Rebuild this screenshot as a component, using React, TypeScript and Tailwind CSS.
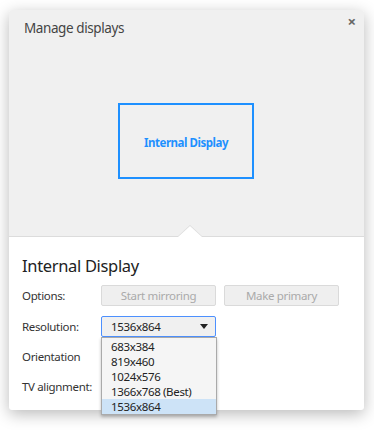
const resolutions = ["683x384", "819x460", "1024x576", "1366x768 (Best)", "1536x864"];

const App = () => {
  return (
    <div className="w-[374px] h-[430px] bg-white pt-[10px] pl-[9px] font-['Noto_Sans',sans-serif] overflow-hidden">
      <div className="relative flex flex-col w-[355px] h-[400px] bg-white rounded-[3px] shadow-[0_4px_16px_rgba(0,0,0,0.28)]">
        {/* top area with display canvas */}
        <div className="relative h-[227px] bg-[#f0f0f0] rounded-t-[3px] border-b border-[#dcdcdc]">
          <h1 className="pt-[9px] pl-[15px] text-[13.5px] leading-[19px] tracking-[-0.03em] text-[#444]">Manage displays</h1>
          <button className="absolute top-[4px] right-[8px] text-[15px] leading-[15px] font-bold text-[#666]">×</button>
          <div className="absolute left-[109px] top-[93px] w-[136px] h-[76px] border-2 border-[#1e90ff] flex items-center justify-center pt-[3px]">
            <span className="text-[11.5px] font-bold tracking-[-0.04em] text-[#1e90ff]">Internal Display</span>
          </div>
          <div className="absolute left-[168px] bottom-[-1px] w-0 h-0 border-x-[13px] border-x-transparent border-b-[12px] border-b-[#dcdcdc]" />
          <div className="absolute left-[169px] bottom-[-1px] w-0 h-0 border-x-[12px] border-x-transparent border-b-[11px] border-b-white" />
        </div>

        <div className="px-[13px] pt-[18px] text-[11.5px] tracking-[-0.03em] text-[#333]">
          <h2 className="text-[16.5px] leading-[22px] tracking-[-0.02em] text-[#222] mb-[8px]">Internal Display</h2>
          <div className="flex items-center h-[21px]">
            <span className="w-[79px]">Options:</span>
            <div className="flex gap-[8px]">
              <button className="w-[115px] h-[21px] rounded-[2px] border border-[#dadada] bg-[#efefef] text-[#aaa] text-[11.5px] tracking-[-0.03em]">Start mirroring</button>
              <button className="w-[115px] h-[21px] rounded-[2px] border border-[#dadada] bg-[#efefef] text-[#aaa] text-[11.5px] tracking-[-0.03em]">Make primary</button>
            </div>
          </div>
          <div className="flex items-center h-[21px] mt-[10px]">
            <span className="w-[79px]">Resolution:</span>
            <div className="relative">
              <div className="w-[115px] h-[21px] rounded-[2px] border border-[#4d90fe] bg-[#f0f0f0] flex items-center justify-between pl-[9px] pr-[7px] text-[#222]">
                <span>1536x864</span>
                <span className="w-0 h-0 border-x-[4px] border-x-transparent border-t-[5px] border-t-[#222]" />
              </div>
              <div className="absolute left-0 top-[21px] w-[116px] border border-[#aaa] bg-[#f5f5f5] shadow-[0_2px_3px_rgba(0,0,0,0.25)] z-10 pt-[1px]">
                {resolutions.map((r, i) => (
                  <div
                    key={r}
                    className={
                      i === resolutions.length - 1
                        ? "h-[15px] leading-[15px] pl-[9px] text-[#222] bg-[#cde3f7]"
                        : "h-[15px] leading-[15px] pl-[9px] text-[#222]"
                    }
                  >
                    {r}
                  </div>
                ))}
              </div>
            </div>
          </div>
          <div className="flex items-center h-[21px] mt-[9px]">
            <span className="w-[79px]">Orientation</span>
          </div>
          <div className="flex items-center h-[21px] mt-[9px]">
            <span className="w-[79px]">TV alignment:</span>
          </div>
        </div>
      </div>
    </div>
  );
};
export default App;
